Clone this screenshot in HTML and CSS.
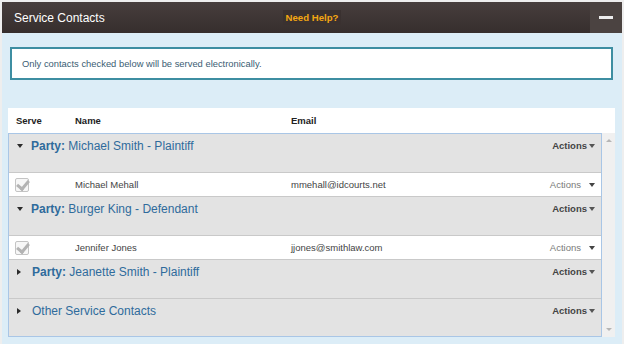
FILE: index.html
```html
<!DOCTYPE html>
<html lang="en">
<head>
    <meta charset="UTF-8">
    <meta name="viewport" content="width=device-width, initial-scale=1.0">
    <title>Service Contacts</title>
    <link rel="stylesheet" href="styles.css">
</head>
<body>
    <div class="panel">
        <div class="panel-head">
            <span class="title">Service Contacts</span>
            <a class="help">Need Help?</a>
            <span class="collapse"><span class="minus"></span></span>
        </div>
        <div class="panel-body">
            <div class="notice">Only contacts checked below will be served electronically.</div>

            <div class="contacts">
                <div class="thead">
                    <span class="col-serve">Serve</span>
                    <span class="col-name">Name</span>
                    <span class="col-email">Email</span>
                </div>
                <div class="tbody">
                    <div class="grid">
                        <div class="group">
                            <div class="group-line">
                                <span class="tri down"></span>
                                <span class="party"><b>Party:</b> Michael Smith - Plaintiff</span>
                                <span class="actions bold">Actions <span class="caret"></span></span>
                            </div>
                        </div>
                        <div class="contact">
                            <span class="col-serve"><span class="check"></span></span>
                            <span class="col-name">Michael Mehall</span>
                            <span class="col-email">mmehall@idcourts.net</span>
                            <span class="actions">Actions <span class="caret"></span></span>
                        </div>
                        <div class="group">
                            <div class="group-line">
                                <span class="tri down"></span>
                                <span class="party"><b>Party:</b> Burger King - Defendant</span>
                                <span class="actions bold">Actions <span class="caret"></span></span>
                            </div>
                        </div>
                        <div class="contact">
                            <span class="col-serve"><span class="check"></span></span>
                            <span class="col-name">Jennifer Jones</span>
                            <span class="col-email">jjones@smithlaw.com</span>
                            <span class="actions">Actions <span class="caret"></span></span>
                        </div>
                        <div class="group">
                            <div class="group-line">
                                <span class="tri right"></span>
                                <span class="party"><b>Party:</b> Jeanette Smith - Plaintiff</span>
                                <span class="actions bold">Actions <span class="caret"></span></span>
                            </div>
                        </div>
                        <div class="group last">
                            <div class="group-line">
                                <span class="tri right"></span>
                                <span class="party">Other Service Contacts</span>
                                <span class="actions bold">Actions <span class="caret"></span></span>
                            </div>
                        </div>
                    </div>
                    <div class="scrollbar">
                        <span class="arrow up"></span>
                        <span class="arrow dn"></span>
                    </div>
                </div>
            </div>
        </div>
    </div>
</body>
</html>
```

FILE: styles.css
```css
body {
    margin: 0;
    padding: 2px 2px 0 2px;
    background-color: #eeeeee;
    font-family: "Liberation Sans", Arial, sans-serif;
}
.panel {
    height: 342px;
    display: flex;
    flex-direction: column;
    background-color: #dcedf7;
}
.panel-head {
    height: 31px;
    display: grid;
    grid-template-columns: 1fr auto 1fr;
    align-items: center;
    background: linear-gradient(#473e3d, #362e2d);
}
.title {
    padding-left: 12px;
    color: #ffffff;
    font-size: 12px;
}
.help {
    padding: 2px 3px;
    background-color: #3a3130;
    color: #f3a712;
    font-size: 9.6px;
    font-weight: bold;
}
.collapse {
    justify-self: end;
    width: 32px;
    height: 31px;
    display: flex;
    align-items: center;
    justify-content: center;
    background-color: #4b4341;
}
.minus {
    width: 14px;
    height: 3px;
    background-color: #ececec;
}
.panel-body {
    padding: 14px 7px 0 6px;
}
.notice {
    margin: 0 2px 28px 2px;
    height: 33px;
    box-sizing: border-box;
    padding-left: 10px;
    display: flex;
    align-items: center;
    background-color: #ffffff;
    border: 2px solid #3d8ea2;
    color: #3b5d73;
    font-size: 9.4px;
}
.contacts {
    font-size: 9.5px;
}
.thead {
    height: 25px;
    display: flex;
    align-items: center;
    padding-left: 8px;
    background-color: #ffffff;
    color: #222222;
    font-weight: bold;
}
.col-serve {
    width: 59px;
}
.col-name {
    width: 216px;
}
.col-email {
    flex: 1;
}
.tbody {
    display: flex;
}
.grid {
    flex: 1;
    border: 1px solid #a9c6e6;
}
.group {
    height: 38px;
    padding: 4px 6px 0 8px;
    box-sizing: border-box;
    background-color: #e3e3e3;
    border-bottom: 1px solid #c9c9c9;
    height: 39px;
}
.group.last {
    border-bottom: none;
    height: 37px;
}
.group-line {
    display: flex;
    align-items: center;
    height: 15px;
}
.tri {
    width: 0;
    height: 0;
    margin-right: 8px;
}
.tri.down {
    border-left: 3.5px solid transparent;
    border-right: 3.5px solid transparent;
    border-top: 4px solid #2b2b2b;
}
.tri.right {
    border-top: 3.5px solid transparent;
    border-bottom: 3.5px solid transparent;
    border-left: 4px solid #2b2b2b;
    margin-right: 11px;
}
.party {
    flex: 1;
    color: #2f6b9c;
    font-size: 12px;
}
.actions {
    display: flex;
    align-items: center;
    color: #7a7a7a;
}
.actions.bold {
    color: #444444;
    font-weight: bold;
}
.caret {
    width: 0;
    height: 0;
    margin-left: 8px;
    border-left: 3.5px solid transparent;
    border-right: 3.5px solid transparent;
    border-top: 4px solid #444444;
}
.actions.bold .caret {
    margin-left: 2px;
    border-top-color: #555555;
}
.contact {
    height: 24px;
    box-sizing: border-box;
    display: flex;
    align-items: center;
    padding: 0 6px 0 6px;
    background-color: #ffffff;
    border-bottom: 1px solid #c9c9c9;
    color: #444444;
}
.contact .col-serve {
    width: 60px;
}
.contact .col-name {
    width: 216px;
}
.check {
    display: block;
    position: relative;
    width: 12px;
    height: 12px;
    border: 1px solid #c4c4c4;
    border-radius: 2px;
    background-color: #f7f7f7;
}
.check::after {
    content: "";
    position: absolute;
    left: 3px;
    top: -1px;
    width: 5px;
    height: 9px;
    border-right: 3px solid #b3b3b3;
    border-bottom: 3px solid #b3b3b3;
    transform: rotate(40deg);
}
.scrollbar {
    width: 13px;
    display: flex;
    flex-direction: column;
    justify-content: space-between;
    align-items: center;
    padding: 6px 0 6px;
    background-color: #f0f0f0;
}
.arrow {
    width: 0;
    height: 0;
    border-left: 3px solid transparent;
    border-right: 3px solid transparent;
}
.arrow.up {
    border-bottom: 3px solid #b5b5b5;
}
.arrow.dn {
    border-top: 3px solid #b5b5b5;
}
```
